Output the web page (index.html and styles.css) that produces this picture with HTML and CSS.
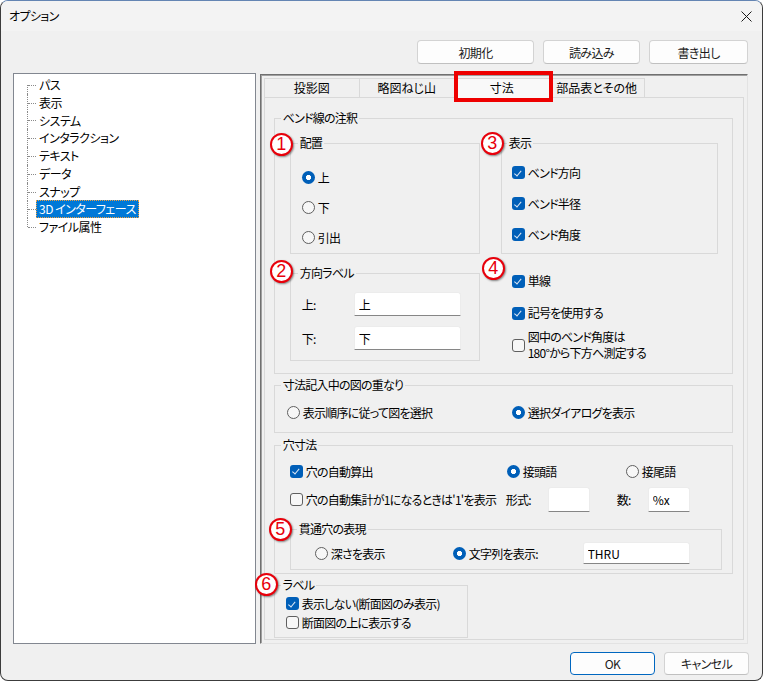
FILE: index.html
```html
<!DOCTYPE html>
<html lang="ja">
<head>
<meta charset="utf-8">
<title>オプション</title>
<link rel="stylesheet" href="styles.css">
</head>
<body>
<div class="window">
  <div class="titlebar">
    <span class="title">オプション</span>
    <span class="close"><svg width="11" height="11" viewBox="0 0 11 11"><path d="M0.5 0.5 L10.5 10.5 M10.5 0.5 L0.5 10.5" stroke="#1a1a1a" stroke-width="1" fill="none"/></svg></span>
  </div>
  <div class="content">
    <div class="toolbar">
      <button class="btn b-init">初期化</button>
      <button class="btn b-load">読み込み</button>
      <button class="btn b-save">書き出し</button>
    </div>
    <div class="main">
      <div class="tree">
        <ul>
          <li><span>パス</span></li>
          <li><span>表示</span></li>
          <li><span>システム</span></li>
          <li><span>インタラクション</span></li>
          <li><span>テキスト</span></li>
          <li><span>データ</span></li>
          <li><span>スナップ</span></li>
          <li><span class="sel">3D インターフェース</span></li>
          <li><span>ファイル属性</span></li>
        </ul>
      </div>
      <div class="tabframe">
        <div class="tabs">
          <div class="tab">投影図</div>
          <div class="tab">略図ねじ山</div>
          <div class="tab active">寸法</div>
          <div class="tab">部品表とその他</div>
        </div>
        <div class="page">
          <fieldset class="grp g-bend">
            <legend>ベンド線の注釈</legend>
            <div class="bend-grid">
              <fieldset class="sub">
                <legend class="lg7">配置</legend>
                <div class="rows30">
                  <label class="opt"><span class="rad on"></span>上</label>
                  <label class="opt"><span class="rad"></span>下</label>
                  <label class="opt"><span class="rad"></span>引出</label>
                </div>
              </fieldset>
              <fieldset class="sub">
                <legend class="lg5">表示</legend>
                <div class="rows31">
                  <label class="opt"><span class="chk on"></span>ベンド方向</label>
                  <label class="opt"><span class="chk on"></span>ベンド半径</label>
                  <label class="opt"><span class="chk on"></span>ベンド角度</label>
                </div>
              </fieldset>
              <fieldset class="sub">
                <legend class="lg7">方向ラベル</legend>
                <div class="dirlabels">
                  <div class="field"><span class="flabel">上:</span><input class="tb dir" type="text" value="上"></div>
                  <div class="field"><span class="flabel">下:</span><input class="tb dir" type="text" value="下"></div>
                </div>
              </fieldset>
              <div class="misc">
                <label class="opt m1"><span class="chk on"></span>単線</label>
                <label class="opt m2"><span class="chk on"></span>記号を使用する</label>
                <label class="opt m3"><span class="chk"></span><span>図中のベンド角度は<br>180°から下方へ測定する</span></label>
              </div>
            </div>
          </fieldset>

          <fieldset class="grp g-overlap">
            <legend>寸法記入中の図の重なり</legend>
            <div class="ov-row">
              <label class="opt ov1"><span class="rad"></span>表示順序に従って図を選択</label>
              <label class="opt"><span class="rad on"></span>選択ダイアログを表示</label>
            </div>
          </fieldset>

          <fieldset class="grp g-hole">
            <legend>穴寸法</legend>
            <div class="hole-body">
              <div class="hrow r1">
                <label class="opt c1"><span class="chk on"></span>穴の自動算出</label>
                <label class="opt c2"><span class="rad on"></span>接頭語</label>
                <label class="opt"><span class="rad"></span>接尾語</label>
              </div>
              <div class="hrow r2">
                <label class="opt c1b"><span class="chk"></span>穴の自動集計が1になるときは'1'を表示</label>
                <span class="flabel fmt">形式:</span><input class="tb small" type="text" value="">
                <span class="flabel num">数:</span><input class="tb small" type="text" value="%x">
              </div>
              <fieldset class="sub thru">
                <legend class="lg6">貫通穴の表現</legend>
                <div class="thru-row">
                  <label class="opt t1"><span class="rad"></span>深さを表示</label>
                  <label class="opt t2"><span class="rad on"></span>文字列を表示:</label>
                  <input class="tb thru-in" type="text" value="THRU">
                </div>
              </fieldset>
            </div>
          </fieldset>

          <fieldset class="grp g-label">
            <legend>ラベル</legend>
            <div class="lbl-body">
              <label class="opt"><span class="chk on"></span>表示しない(断面図のみ表示)</label>
              <label class="opt"><span class="chk"></span>断面図の上に表示する</label>
            </div>
          </fieldset>

          <span class="badge n1">1</span>
          <span class="badge n2">2</span>
          <span class="badge n3">3</span>
          <span class="badge n4">4</span>
          <span class="badge n5">5</span>
          <span class="badge n6">6</span>
        </div>
        <div class="highlight"></div>
      </div>
    </div>
    <div class="footer">
      <button class="btn b-ok">OK</button>
      <button class="btn b-cancel">キャンセル</button>
    </div>
  </div>
</div>
</body>
</html>
```

FILE: styles.css
```css
html, body {
  margin: 0;
  padding: 0;
  background: #ffffff;
}
body {
  font-family: "Noto Sans CJK JP", "Noto Sans", sans-serif;
  font-size: 12px;
  color: #000;
  font-feature-settings: "palt";
  letter-spacing: -0.75px;
}
.window {
  width: 763px;
  height: 681px;
  box-sizing: border-box;
  border: 1px solid #3c3c3c;
  border-top-color: #6485b3;
  border-radius: 8px;
  background: #f0f0f0;
  overflow: hidden;
}
.titlebar {
  height: 30px;
  background: #f3f3f3;
  display: flex;
  align-items: center;
  justify-content: space-between;
  padding: 0 10px 0 8px;
}
.title {
  line-height: 16px;
  letter-spacing: -0.6px;
}
.close {
  display: flex;
  width: 11px;
  height: 11px;
}
.content {
  padding: 0 14px 0 12px;
}
.toolbar {
  display: flex;
  justify-content: flex-end;
  gap: 9px;
  margin-top: 9px;
}
.btn {
  box-sizing: border-box;
  height: 24px;
  padding: 0;
  border: 1px solid #d3d3d3;
  border-bottom-color: #c0c0c0;
  border-radius: 4px;
  background: #fdfdfd;
  font: inherit;
  letter-spacing: -0.6px;
  color: #1b1b1b;
}
.b-init { width: 117px; }
.b-load { width: 97px; }
.b-save { width: 99px; }
.main {
  display: flex;
  gap: 4px;
  margin-top: 9px;
  height: 571px;
}
.tree {
  width: 243px;
  box-sizing: border-box;
  border: 1px solid #828790;
  background: #fff;
  padding-top: 2px;
}
.tree ul {
  list-style: none;
  margin: 0;
  padding: 0 0 0 13px;
}
.tree li {
  position: relative;
  height: 17.8px;
  line-height: 17.8px;
  padding-left: 10px;
  display: flex;
  align-items: center;
  letter-spacing: -0.5px;
}
.tree li::before {
  content: "";
  position: absolute;
  left: 1px;
  top: 50%;
  width: 8px;
  border-top: 1px dotted #8a8a8a;
}
.tree li::after {
  content: "";
  position: absolute;
  left: 0;
  top: 0;
  bottom: 0;
  border-left: 1px dotted #8a8a8a;
}
.tree li:first-child::after { top: 50%; }
.tree li:last-child::after { bottom: 50%; }
.tree li span {
  padding: 0 2px;
  height: 16px;
  line-height: 16px;
  border: 1px solid transparent;
  margin-left: -1px;
}
.tree li span.sel {
  background: #0078d7;
  color: #fff;
  border: 1px dotted #f0a040;
}
.tabframe {
  position: relative;
  margin-top: 1px;
  width: 489px;
  height: 570px;
  box-sizing: border-box;
  border: 1px solid #e3e3e3;
  border-top-color: #707070;
  border-left-color: #707070;
  box-shadow: inset 1px 1px 0 #a0a0a0;
  padding: 3px;
  display: flex;
  flex-direction: column;
}
.tabs {
  display: flex;
  height: 19px;
  position: relative;
  z-index: 1;
}
.tab {
  width: 96px;
  box-sizing: border-box;
  border: 1px solid #d9d9d9;
  border-bottom: none;
  margin-right: -1px;
  text-align: center;
  line-height: 18px;
  background: #f0f0f0;
  letter-spacing: 0;
  font-size: 12px;
}
.tab.active {
  background: #f9f9f9;
  height: 20px;
}
.page {
  position: relative;
  flex: 1;
  border: 1px solid #d9d9d9;
  padding: 12px 0 0 9px;
}
fieldset {
  margin: 0;
  padding: 0;
  border: 1px solid #d9d9d9;
  box-sizing: border-box;
  min-inline-size: 0;
}
legend {
  padding: 0 2px;
  margin-left: 6px;
  height: 16px;
  line-height: 16px;
}
.lg7 { margin-left: 7px; }
.lg5 { margin-left: 5px; }
.lg6 { margin-left: 6px; }
.opt {
  display: flex;
  align-items: center;
  gap: 3px;
  white-space: nowrap;
}
.rad, .chk {
  position: relative;
  flex: none;
  width: 13px;
  height: 13px;
  box-sizing: border-box;
  border: 1px solid #5f5f5f;
  background: #f7f7f7;
}
.rad { border-radius: 50%; }
.rad.on {
  border: none;
  background: radial-gradient(circle, #ffffff 0 2.3px, #005fb8 2.9px);
}
.chk { border-radius: 3px; }
.chk.on {
  border: none;
  background: #005fb8;
}
.chk.on::after {
  content: "";
  position: absolute;
  left: 4.5px;
  top: 2.5px;
  width: 2.5px;
  height: 5.5px;
  border: solid #dfe9f5;
  border-width: 0 1px 1px 0;
  transform: rotate(40deg);
}
.tb {
  box-sizing: border-box;
  margin: 0;
  padding: 0 0 0 4px;
  border: 1px solid #ececec;
  border-bottom: 1px solid #868686;
  border-radius: 3px 3px 0 0;
  background: #fff;
  font: inherit;
  letter-spacing: 0;
  color: #000;
  outline: none;
}
.g-bend { width: 459px; }
.bend-grid {
  display: grid;
  grid-template-columns: 190px 217px;
  column-gap: 21px;
  row-gap: 11px;
  padding: 9px 0 12px 15px;
}
.rows30 { padding: 11px 0 1px 11px; }
.rows30 .opt { height: 30px; }
.rows31 { padding: 6px 0 3px 10px; }
.rows31 .opt { height: 31px; }
.dirlabels {
  display: flex;
  flex-direction: column;
  gap: 10px;
  padding: 11px 0 8px 11px;
}
.field {
  display: flex;
  align-items: center;
}
.flabel { flex: none; }
.field .flabel { width: 52px; }
.tb.dir { width: 107px; height: 24px; }
.misc {
  display: flex;
  flex-direction: column;
  padding: 8px 0 0 11px;
}
.misc .opt { line-height: 16px; }
.misc .m2 { margin-top: 16px; }
.misc .m3 { margin-top: 8px; align-items: center; }
.g-overlap { width: 459px; margin-top: 3px; }
.ov-row {
  display: flex;
  height: 16px;
  padding: 11px 0 12px 12px;
}
.ov1 { width: 225px; }
.g-hole { width: 459px; margin-top: 4px; }
.hole-body { padding: 10px 0 3px 15px; }
.hrow { display: flex; align-items: center; }
.r1 { height: 16px; }
.c1 { width: 217px; }
.c2 { width: 119px; }
.r2 { height: 25px; margin-top: 8px; }
.c1b { width: 216px; }
.fmt { width: 42px; }
.num { width: 31px; margin-left: 27px; }
.tb.small { width: 42px; height: 25px; }
.thru { width: 432px; margin-top: 9px; }
.thru-row {
  display: flex;
  align-items: center;
  height: 22px;
  padding: 5px 0 5px 24px;
}
.t1 { width: 138px; }
.t2 { width: 130px; }
.tb.thru-in { width: 107px; height: 22px; }
.g-label { width: 194px; margin-top: 3px; }
.lbl-body { padding: 1px 0 5px 11px; }
.lbl-body .opt { height: 19px; }
.badge {
  position: absolute;
  width: 23px;
  height: 23px;
  box-sizing: border-box;
  border-radius: 50%;
  border: 2px solid #e8000b;
  background: #fff;
  color: #e8000b;
  font-family: "Liberation Sans", sans-serif;
  font-size: 18px;
  line-height: 19px;
  text-align: center;
  letter-spacing: 0;
  box-shadow: 1px 1px 2px rgba(0, 0, 0, 0.45);
}
.n1 { left: 5px; top: 35px; }
.n2 { left: 5px; top: 162px; }
.n3 { left: 216px; top: 34px; }
.n4 { left: 217px; top: 159px; }
.n5 { left: 4px; top: 420px; }
.n6 { left: -10px; top: 475px; }
.highlight {
  position: absolute;
  left: 193px;
  top: -4px;
  width: 99px;
  height: 31px;
  box-sizing: border-box;
  border: 4px solid #ee0000;
  z-index: 2;
}
.footer {
  display: flex;
  justify-content: flex-end;
  gap: 9px;
  margin-top: 8px;
  margin-right: -1px;
}
.b-ok, .b-cancel {
  width: 85px;
  height: 23px;
}
.b-ok {
  border: 1px solid #0067c0;
}
```
